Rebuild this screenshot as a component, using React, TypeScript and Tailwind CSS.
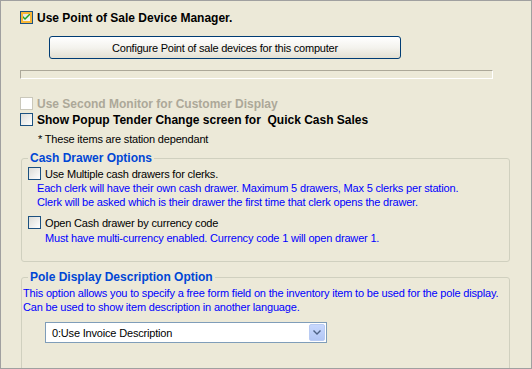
import React from 'react';

type BoxProps = {
  checked?: boolean;
  disabled?: boolean;
  hover?: boolean;
};

function XpCheckbox({ checked = false, disabled = false, hover = false }: BoxProps) {
  if (disabled) {
    return <div className="w-[13px] h-[13px] shrink-0 border border-[#cac8bb] bg-white" />;
  }
  return (
    <div
      className={`w-[13px] h-[13px] shrink-0 border border-[#1c5180] bg-gradient-to-br from-[#dcdcd7] to-white flex items-center justify-center ${
        hover ? 'shadow-[inset_0_0_0_2px_#f8b636]' : ''
      }`}
    >
      {checked && (
        <svg width="7" height="7" viewBox="0 0 7 7">
          <path d="M0 2 L0 4 L2 6 L7 1 L7 -1 L2 4 Z" fill="#21a121" />
        </svg>
      )}
    </div>
  );
}

export default function App() {
  return (
    <div
      className="w-[532px] h-[369px] overflow-hidden border border-[#a0a0a0] bg-[#ece9d8] text-[11px] leading-[14px] tracking-[-0.18px] text-black whitespace-nowrap"
      style={{ fontFamily: '"Liberation Sans", Arial, sans-serif' }}
    >
      {/* main check */}
      <div className="mt-[10px] ml-[19px] flex items-center gap-[4px] h-[13px]">
        <XpCheckbox checked hover />
        <span className="font-bold text-[12px] tracking-normal">Use Point of Sale Device Manager.</span>
      </div>

      <button className="mt-[12px] ml-[48px] w-[352px] h-[23px] rounded-[3px] border border-[#003c74] bg-gradient-to-b from-white via-[#f4f3ee] to-[#e3e0d2] flex items-center justify-center tracking-[-0.22px]">
        Configure Point of sale devices for this computer
      </button>

      <div className="mt-[11px] ml-[19px] w-[473px] h-[9px] border-t border-l border-[#aca899] border-b-white border-r-white border-b border-r" />

      <div className="mt-[18px] ml-[19px] flex items-center gap-[4px] h-[13px]">
        <XpCheckbox disabled />
        <span className="font-bold text-[12px] tracking-normal text-[#aca899]">Use Second Monitor for Customer Display</span>
      </div>

      <div className="mt-[3px] ml-[19px] flex items-center gap-[4px] h-[13px]">
        <XpCheckbox />
        <span className="font-bold text-[12px] tracking-normal">Show Popup Tender Change screen for&nbsp; Quick Cash Sales</span>
      </div>

      <div className="mt-[6px] ml-[37px]">* These items are station dependant</div>

      {/* cash drawer group */}
      <fieldset className="mt-[6px] ml-[20px] w-[489px] border border-[#d0d0bf] rounded-[3px] pb-[16px]">
        <legend className="ml-[6px] px-[2px] font-bold text-[12px] tracking-normal leading-[13px] text-[#0046d5]">
          Cash Drawer Options
        </legend>
        <div className="mt-[2px] ml-[6px] flex items-center gap-[4px] h-[13px]">
          <XpCheckbox />
          <span>Use Multiple cash drawers for clerks.</span>
        </div>
        <div className="mt-[1px] ml-[15px] text-[#0000ff]">
          <div>Each clerk will have their own cash drawer. Maximum 5 drawers, Max 5 clerks per station.</div>
          <div>Clerk will be asked which is their drawer the first time that clerk opens the drawer.</div>
        </div>
        <div className="mt-[7px] ml-[6px] flex items-center gap-[4px] h-[13px]">
          <XpCheckbox />
          <span>Open Cash drawer by currency code</span>
        </div>
        <div className="mt-[2px] ml-[23px] text-[#0000ff]">
          Must have multi-currency enabled. Currency code 1 will open drawer 1.
        </div>
      </fieldset>

      {/* pole display group */}
      <fieldset className="mt-[9px] ml-[20px] w-[489px] h-[140px] border border-[#d0d0bf] rounded-[3px]">
        <legend className="ml-[6px] px-[2px] font-bold text-[12px] tracking-normal leading-[13px] text-[#0046d5]">
          Pole Display Description Option
        </legend>
        <div className="mt-[2px] ml-[1px] text-[#0000ff]">
          <div>This option allows you to specify a free form field on the inventory item to be used for the pole display.</div>
          <div>Can be used to show item description in another language.</div>
        </div>
        <div className="mt-[8px] ml-[23px] w-[282px] h-[21px] border border-[#7f9db9] bg-white flex items-center">
          <span className="flex-1 pl-[6px]">0:Use Invoice Description</span>
          <div className="w-[16px] h-[17px] mr-[1px] rounded-[2px] border border-[#b9cbf3] bg-gradient-to-b from-[#c8d8fd] to-[#b2c6f5] flex items-center justify-center">
            <svg width="8" height="6" viewBox="0 0 8 6">
              <path d="M0 1 L1 0 L4 3 L7 0 L8 1 L4 5 Z" fill="#4d6185" />
            </svg>
          </div>
        </div>
      </fieldset>
    </div>
  );
}
